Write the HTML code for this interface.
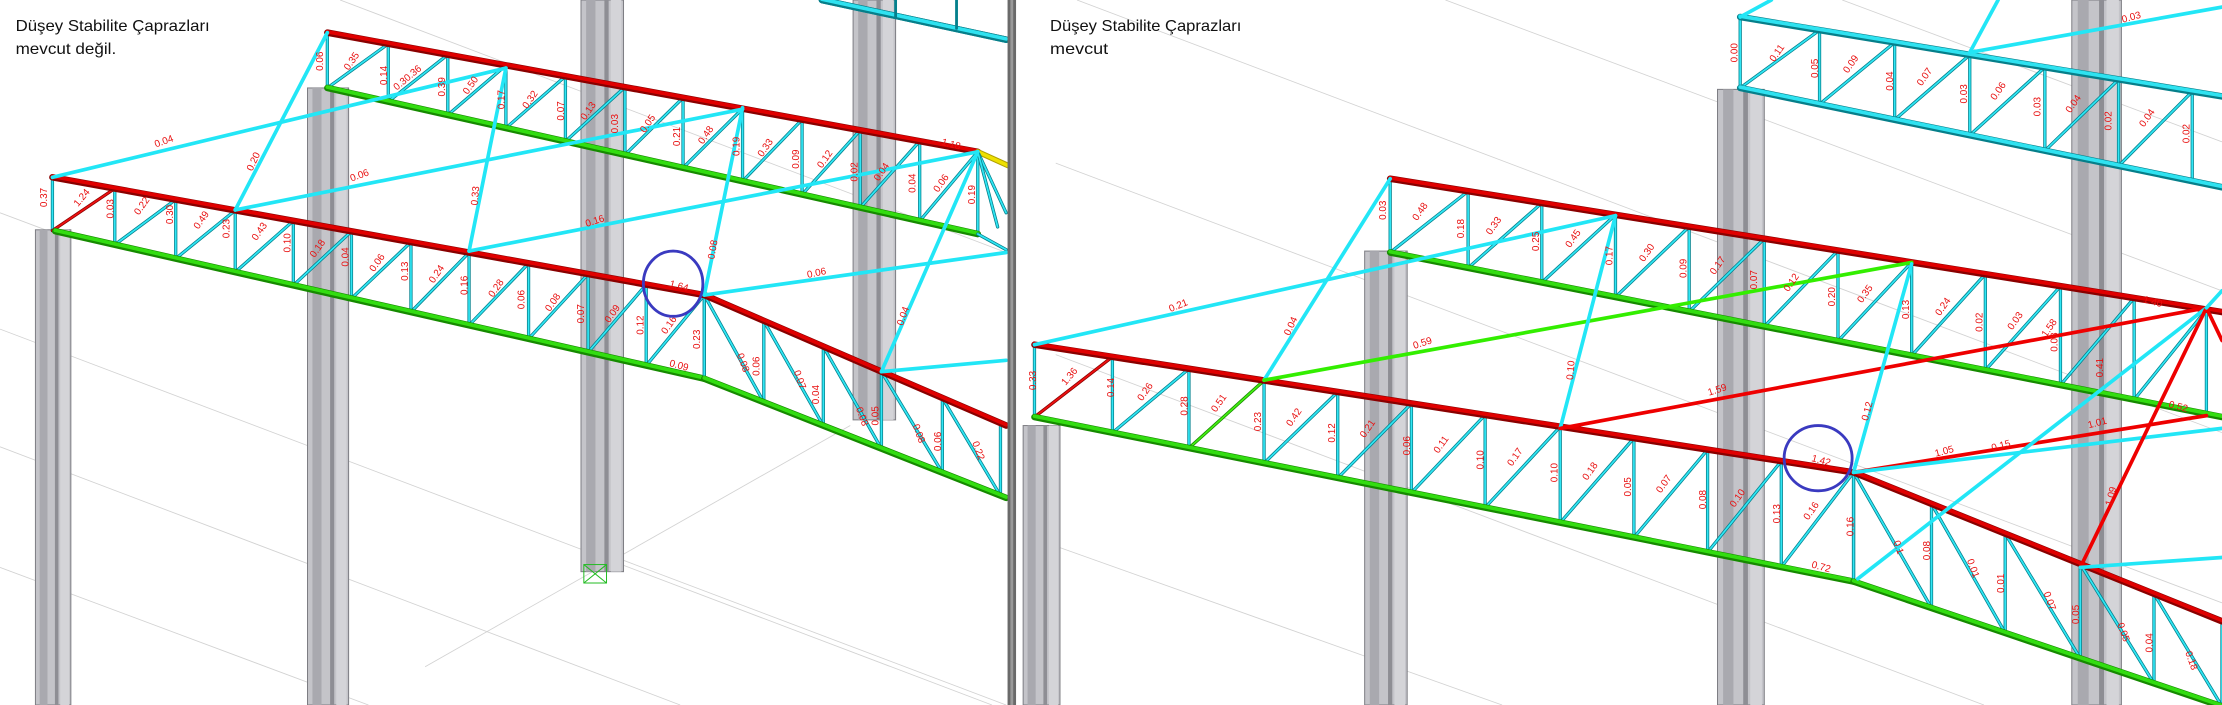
<!DOCTYPE html>
<html><head><meta charset="utf-8"><style>
html,body{margin:0;padding:0;background:#fff;overflow:hidden}
svg{display:block}
.t{font-family:"Liberation Sans",sans-serif;fill:#111}
.l{font-family:"Liberation Sans",sans-serif;font-size:7px;fill:#e81010}
</style></head><body>
<svg id="s" xmlns="http://www.w3.org/2000/svg" width="2222" height="705" viewBox="0 0 1568 497" preserveAspectRatio="none">
<rect width="1568" height="497" fill="#fff"/>
<g id="grid" stroke="#d2d2d2" stroke-width="0.6" fill="none">
<line x1="0" y1="232" x2="700" y2="497"/>
<line x1="0" y1="315" x2="480" y2="497"/>
<line x1="0" y1="400" x2="260" y2="497"/>
<line x1="240" y1="0" x2="710" y2="178"/>
<line x1="300" y1="470" x2="600" y2="300"/>
<line x1="0" y1="150" x2="40" y2="165"/>
<line x1="440" y1="395" x2="710" y2="497"/>
<line x1="760" y1="0" x2="1568" y2="305"/>
<line x1="745" y1="115" x2="1568" y2="425"/>
<line x1="745" y1="250" x2="1400" y2="497"/>
<line x1="745" y1="385" x2="1060" y2="497"/>
<line x1="1020" y1="0" x2="1568" y2="205"/>
<line x1="1300" y1="0" x2="1568" y2="100"/>
</g>
<g id="cols"></g>
<g id="trs"></g>
<g id="br"></g>
<rect x="412" y="398" width="16" height="13" fill="none" stroke="#22bb22" stroke-width="0.7"/>
<line x1="412" y1="398" x2="428" y2="411" stroke="#22bb22" stroke-width="0.7"/>
<line x1="428" y1="398" x2="412" y2="411" stroke="#22bb22" stroke-width="0.7"/>
<g>
<text class="l" transform="translate(33,146) rotate(-90)">0.37</text>
<text class="l" transform="translate(55,146) rotate(-50)">1.24</text>
<text class="l" transform="translate(80,154) rotate(-90)">0.03</text>
<text class="l" transform="translate(98,152) rotate(-55)">0.22</text>
<text class="l" transform="translate(122,158) rotate(-90)">0.30</text>
<text class="l" transform="translate(140,162) rotate(-55)">0.49</text>
<text class="l" transform="translate(162,168) rotate(-90)">0.23</text>
<text class="l" transform="translate(181,170) rotate(-55)">0.43</text>
<text class="l" transform="translate(205,178) rotate(-90)">0.10</text>
<text class="l" transform="translate(222,182) rotate(-55)">0.18</text>
<text class="l" transform="translate(246,188) rotate(-90)">0.04</text>
<text class="l" transform="translate(264,192) rotate(-55)">0.06</text>
<text class="l" transform="translate(288,198) rotate(-90)">0.13</text>
<text class="l" transform="translate(306,200) rotate(-55)">0.24</text>
<text class="l" transform="translate(330,208) rotate(-90)">0.16</text>
<text class="l" transform="translate(348,210) rotate(-55)">0.28</text>
<text class="l" transform="translate(370,218) rotate(-90)">0.06</text>
<text class="l" transform="translate(388,220) rotate(-55)">0.08</text>
<text class="l" transform="translate(412,228) rotate(-90)">0.07</text>
<text class="l" transform="translate(430,228) rotate(-55)">0.09</text>
<text class="l" transform="translate(454,236) rotate(-90)">0.12</text>
<text class="l" transform="translate(470,236) rotate(-55)">0.16</text>
<text class="l" transform="translate(494,246) rotate(-90)">0.23</text>
<text class="l" transform="translate(472,258) rotate(15)">0.09</text>
<text class="l" transform="translate(472,202) rotate(15)">1.64</text>
<text class="l" transform="translate(520,250) rotate(70)">0.08</text>
<text class="l" transform="translate(536,265) rotate(-90)">0.06</text>
<text class="l" transform="translate(560,262) rotate(70)">0.07</text>
<text class="l" transform="translate(578,285) rotate(-90)">0.04</text>
<text class="l" transform="translate(604,288) rotate(70)">0.08</text>
<text class="l" transform="translate(620,300) rotate(-90)">0.05</text>
<text class="l" transform="translate(644,300) rotate(70)">0.08</text>
<text class="l" transform="translate(664,318) rotate(-90)">0.06</text>
<text class="l" transform="translate(686,312) rotate(70)">0.22</text>
<text class="l" transform="translate(228,50) rotate(-90)">0.06</text>
<text class="l" transform="translate(246,50) rotate(-55)">0.35</text>
<text class="l" transform="translate(273,60) rotate(-90)">0.14</text>
<text class="l" transform="translate(280,64) rotate(-40)">0.30.36</text>
<text class="l" transform="translate(314,68) rotate(-90)">0.39</text>
<text class="l" transform="translate(330,67) rotate(-55)">0.50</text>
<text class="l" transform="translate(356,77) rotate(-90)">0.17</text>
<text class="l" transform="translate(372,77) rotate(-55)">0.32</text>
<text class="l" transform="translate(398,85) rotate(-90)">0.07</text>
<text class="l" transform="translate(413,85) rotate(-55)">0.13</text>
<text class="l" transform="translate(436,94) rotate(-90)">0.03</text>
<text class="l" transform="translate(455,94) rotate(-55)">0.05</text>
<text class="l" transform="translate(480,103) rotate(-90)">0.21</text>
<text class="l" transform="translate(496,102) rotate(-55)">0.48</text>
<text class="l" transform="translate(522,110) rotate(-90)">0.19</text>
<text class="l" transform="translate(538,111) rotate(-55)">0.33</text>
<text class="l" transform="translate(564,119) rotate(-90)">0.09</text>
<text class="l" transform="translate(580,119) rotate(-55)">0.12</text>
<text class="l" transform="translate(605,128) rotate(-90)">0.02</text>
<text class="l" transform="translate(620,128) rotate(-55)">0.04</text>
<text class="l" transform="translate(646,136) rotate(-90)">0.04</text>
<text class="l" transform="translate(662,136) rotate(-55)">0.06</text>
<text class="l" transform="translate(688,144) rotate(-90)">0.19</text>
<text class="l" transform="translate(664,102) rotate(15)">1.18</text>
<text class="l" transform="translate(110,104) rotate(-20)">0.04</text>
<text class="l" transform="translate(178,121) rotate(-65)">0.20</text>
<text class="l" transform="translate(248,128) rotate(-20)">0.06</text>
<text class="l" transform="translate(337,145) rotate(-85)">0.33</text>
<text class="l" transform="translate(414,160) rotate(-18)">0.16</text>
<text class="l" transform="translate(504,183) rotate(-80)">0.08</text>
<text class="l" transform="translate(570,196) rotate(-12)">0.06</text>
<text class="l" transform="translate(637,230) rotate(-70)">0.04</text>

<text class="l" transform="translate(731,275) rotate(-90)">0.33</text>
<text class="l" transform="translate(752,272) rotate(-50)">1.36</text>
<text class="l" transform="translate(786,280) rotate(-90)">0.14</text>
<text class="l" transform="translate(806,283) rotate(-55)">0.26</text>
<text class="l" transform="translate(838,293) rotate(-90)">0.28</text>
<text class="l" transform="translate(858,291) rotate(-55)">0.51</text>
<text class="l" transform="translate(890,304) rotate(-90)">0.23</text>
<text class="l" transform="translate(911,301) rotate(-55)">0.42</text>
<text class="l" transform="translate(942,312) rotate(-90)">0.12</text>
<text class="l" transform="translate(963,309) rotate(-55)">0.21</text>
<text class="l" transform="translate(995,321) rotate(-90)">0.06</text>
<text class="l" transform="translate(1015,320) rotate(-55)">0.11</text>
<text class="l" transform="translate(1047,331) rotate(-90)">0.10</text>
<text class="l" transform="translate(1067,329) rotate(-55)">0.17</text>
<text class="l" transform="translate(1099,340) rotate(-90)">0.10</text>
<text class="l" transform="translate(1120,339) rotate(-55)">0.18</text>
<text class="l" transform="translate(1151,350) rotate(-90)">0.05</text>
<text class="l" transform="translate(1172,348) rotate(-55)">0.07</text>
<text class="l" transform="translate(1204,359) rotate(-90)">0.08</text>
<text class="l" transform="translate(1224,358) rotate(-55)">0.10</text>
<text class="l" transform="translate(1256,369) rotate(-90)">0.13</text>
<text class="l" transform="translate(1276,367) rotate(-55)">0.16</text>
<text class="l" transform="translate(1308,378) rotate(-90)">0.16</text>
<text class="l" transform="translate(1278,325) rotate(15)">1.42</text>
<text class="l" transform="translate(1278,400) rotate(15)">0.72</text>
<text class="l" transform="translate(1336,382) rotate(70)">0.1</text>
<text class="l" transform="translate(1362,395) rotate(-90)">0.08</text>
<text class="l" transform="translate(1388,395) rotate(70)">0.01</text>
<text class="l" transform="translate(1414,418) rotate(-90)">0.01</text>
<text class="l" transform="translate(1442,418) rotate(70)">0.07</text>
<text class="l" transform="translate(1467,440) rotate(-90)">0.05</text>
<text class="l" transform="translate(1494,440) rotate(70)">0.05</text>
<text class="l" transform="translate(1519,460) rotate(-90)">0.04</text>
<text class="l" transform="translate(1542,460) rotate(70)">0.18</text>
<text class="l" transform="translate(978,155) rotate(-90)">0.03</text>
<text class="l" transform="translate(1000,156) rotate(-55)">0.48</text>
<text class="l" transform="translate(1033,168) rotate(-90)">0.18</text>
<text class="l" transform="translate(1052,166) rotate(-55)">0.33</text>
<text class="l" transform="translate(1086,177) rotate(-90)">0.25</text>
<text class="l" transform="translate(1108,175) rotate(-55)">0.45</text>
<text class="l" transform="translate(1138,187) rotate(-90)">0.17</text>
<text class="l" transform="translate(1160,185) rotate(-55)">0.30</text>
<text class="l" transform="translate(1190,196) rotate(-90)">0.09</text>
<text class="l" transform="translate(1210,194) rotate(-55)">0.17</text>
<text class="l" transform="translate(1240,204) rotate(-90)">0.07</text>
<text class="l" transform="translate(1262,206) rotate(-55)">0.12</text>
<text class="l" transform="translate(1295,216) rotate(-90)">0.20</text>
<text class="l" transform="translate(1314,214) rotate(-55)">0.35</text>
<text class="l" transform="translate(1347,225) rotate(-90)">0.13</text>
<text class="l" transform="translate(1369,223) rotate(-55)">0.24</text>
<text class="l" transform="translate(1399,234) rotate(-90)">0.02</text>
<text class="l" transform="translate(1420,233) rotate(-55)">0.03</text>
<text class="l" transform="translate(1444,238) rotate(-55)">1.58</text>
<text class="l" transform="translate(1452,248) rotate(-90)">0.08</text>
<text class="l" transform="translate(1484,266) rotate(-90)">0.41</text>
<text class="l" transform="translate(1512,213) rotate(15)">1.40</text>
<text class="l" transform="translate(1530,287) rotate(15)">0.52</text>
<text class="l" transform="translate(826,220) rotate(-22)">0.21</text>
<text class="l" transform="translate(910,237) rotate(-65)">0.04</text>
<text class="l" transform="translate(998,246) rotate(-18)">0.59</text>
<text class="l" transform="translate(1110,268) rotate(-85)">0.10</text>
<text class="l" transform="translate(1206,279) rotate(-18)">1.59</text>
<text class="l" transform="translate(1318,297) rotate(-75)">0.12</text>
<text class="l" transform="translate(1366,322) rotate(-15)">1.05</text>
<text class="l" transform="translate(1406,318) rotate(-15)">0.15</text>
<text class="l" transform="translate(1474,302) rotate(-15)">1.01</text>
<text class="l" transform="translate(1490,357) rotate(-75)">1.09</text>
<text class="l" transform="translate(1226,44) rotate(-90)">0.00</text>
<text class="l" transform="translate(1252,44) rotate(-55)">0.11</text>
<text class="l" transform="translate(1283,55) rotate(-90)">0.05</text>
<text class="l" transform="translate(1304,52) rotate(-55)">0.09</text>
<text class="l" transform="translate(1336,64) rotate(-90)">0.04</text>
<text class="l" transform="translate(1356,61) rotate(-55)">0.07</text>
<text class="l" transform="translate(1388,73) rotate(-90)">0.03</text>
<text class="l" transform="translate(1408,71) rotate(-55)">0.06</text>
<text class="l" transform="translate(1440,82) rotate(-90)">0.03</text>
<text class="l" transform="translate(1461,80) rotate(-55)">0.04</text>
<text class="l" transform="translate(1490,92) rotate(-90)">0.02</text>
<text class="l" transform="translate(1513,90) rotate(-55)">0.04</text>
<text class="l" transform="translate(1545,101) rotate(-90)">0.02</text>
<text class="l" transform="translate(1498,16) rotate(-15)">0.03</text>
</g>
<ellipse cx="475" cy="200" rx="21" ry="23" fill="none" stroke="#3a3ac0" stroke-width="2"/>
<ellipse cx="1283" cy="323" rx="24" ry="23" fill="none" stroke="#3a3ac0" stroke-width="2"/>
<text class="t" x="11" y="22" font-size="11" textLength="137" lengthAdjust="spacingAndGlyphs">Düşey Stabilite Çaprazları</text>
<text class="t" x="11" y="38" font-size="11" textLength="71" lengthAdjust="spacingAndGlyphs">mevcut değil.</text>
<text class="t" x="741" y="22" font-size="11" textLength="135" lengthAdjust="spacingAndGlyphs">Düşey Stabilite Çaprazları</text>
<text class="t" x="741" y="38" font-size="11" textLength="41" lengthAdjust="spacingAndGlyphs">mevcut</text>
<rect x="711" y="0" width="6" height="497" fill="#6a6a6a"/>
<rect x="713" y="0" width="2" height="497" fill="#9a9a9a"/>
</svg>
<script>
var NS="http://www.w3.org/2000/svg";
function el(g,n,a){var e=document.createElementNS(NS,n);for(var k in a)e.setAttribute(k,a[k]);document.getElementById(g).appendChild(e);return e;}
function L(g,x1,y1,x2,y2,c,w){el(g,"line",{x1:x1,y1:y1,x2:x2,y2:y2,stroke:c,"stroke-width":w,"stroke-linecap":"round"});}
function col(x,w,y1,y2){
 el("cols","rect",{x:x,y:y1,width:w,height:y2-y1,fill:"#c4c4c9",stroke:"#7c7c82","stroke-width":0.7});
 el("cols","rect",{x:x+w*0.12,y:y1,width:w*0.22,height:y2-y1,fill:"#a9a9af"});
 el("cols","rect",{x:x+w*0.55,y:y1,width:w*0.1,height:y2-y1,fill:"#8e8e94"});
 el("cols","rect",{x:x+w*0.7,y:y1,width:w*0.25,height:y2-y1,fill:"#d4d4d8"});
}
col(25,25,162,497);col(217,29,62,497);col(410,30,0,403);col(602,30,0,296);
col(722,26,300,497);col(963,30,177,497);col(1212,33,63,497);col(1462,35,0,497);
var CH={r:["#8a0000","#e00000"],g:["#168a00","#33dd11"],c:["#067f8a","#2fe2f0"]};
function yAt(p,q,x){return p[1]+(q[1]-p[1])*(x-p[0])/(q[0]-p[0]);}
function mem(x1,y1,x2,y2,c){var o={r:["#8a0000","#ee1010"],g:["#168a00","#44ee11"],c:["#05808c","#30e6f4"]}[c];L("trs",x1,y1,x2,y2,o[0],2.3);L("trs",x1,y1,x2,y2,o[1],1.2);}
function truss(t0,t1,b0,b1,nodes,dir,tc,bc,sp){
 sp=sp||{};
 for(var i=0;i<nodes.length;i++){var x=nodes[i];mem(x,yAt(t0,t1,x),x,yAt(b0,b1,x),"c");}
 for(var i=0;i<nodes.length-1;i++){var a=nodes[i],b=nodes[i+1],c=sp[i]||"c";
  if(dir=="/")mem(a,yAt(b0,b1,a),b,yAt(t0,t1,b),c);else mem(a,yAt(t0,t1,a),b,yAt(b0,b1,b),c);}
 L("trs",t0[0],t0[1],t1[0],t1[1],CH[tc][0],4.6);L("trs",t0[0],t0[1]-0.6,t1[0],t1[1]-0.6,CH[tc][1],2.6);
 L("trs",b0[0],b0[1],b1[0],b1[1],CH[bc][0],4.6);L("trs",b0[0],b0[1]-0.6,b1[0],b1[1]-0.6,CH[bc][1],2.6);
}
// left panel
truss([580,0],[710,28],[580,0],[710,28],[],"/","c","c");
L("trs",632,0,632,12,"#05808c",2);L("trs",675,0,675,20,"#05808c",2);
truss([231,23],[690,107],[231,62],[690,165],[231,274,316,357,399,441,482,524,566,607,649,690],"/","r","g");
L("trs",690,107,712,117,"#b0a000",4);L("trs",690,107,712,117,"#eee000",2.5);
mem(690,107,710,150,"c");mem(690,107,704,160,"c");mem(690,165,710,176,"c");
truss([37,125],[497,208],[39,163],[497,267],[37,81,124,166,207,248,290,331,373,415,456,497],"/","r","g",{0:"r"});
truss([497,208],[710,300],[497,267],[710,351],[497,539,581,622,665,706],"\\","r","g");
// right panel
truss([1228,12],[1568,68],[1228,62],[1568,132],[1228,1284,1337,1390,1443,1495,1547],"/","c","c");
truss([981,126],[1568,220],[981,178],[1568,294],[981,1036,1088,1140,1192,1245,1297,1349,1401,1454,1506,1557],"/","r","g");
truss([730,243],[1308,333],[730,294],[1308,410],[730,785,839,892,944,996,1048,1101,1153,1205,1257,1308],"/","r","g",{0:"r",2:"g"});
truss([1308,333],[1568,438],[1308,410],[1568,498],[1308,1363,1415,1468,1520,1568],"\\","r","g");
function B(x1,y1,x2,y2,c){L("br",x1,y1,x2,y2,c,2.6);}
var cy="#22e6f6",rd="#ee0000",gr="#33ee00";
B(37,125,357,48,cy);B(166,148,231,23,cy);B(166,148,524,77,cy);B(331,177,357,48,cy);B(331,177,690,107,cy);
B(497,208,524,76,cy);B(497,208,710,178,cy);B(622,262,690,107,cy);B(622,262,710,254,cy);
B(1228,12,1250,0,cy);B(1390,37,1568,5,cy);B(1390,37,1410,0,cy);
B(730,243,1140,152,cy);B(892,268,981,126,cy);B(892,268,1349,185,gr);B(1101,302,1140,152,cy);
B(1101,302,1557,217,rd);B(1308,333,1349,186,cy);B(1308,333,1557,293,rd);B(1308,333,1568,302,cy);
B(1311,408,1557,217,cy);B(1468,400,1557,217,rd);B(1468,400,1568,393,cy);B(1557,217,1568,240,rd);
B(1557,217,1568,205,cy);
</script>
</body></html>
